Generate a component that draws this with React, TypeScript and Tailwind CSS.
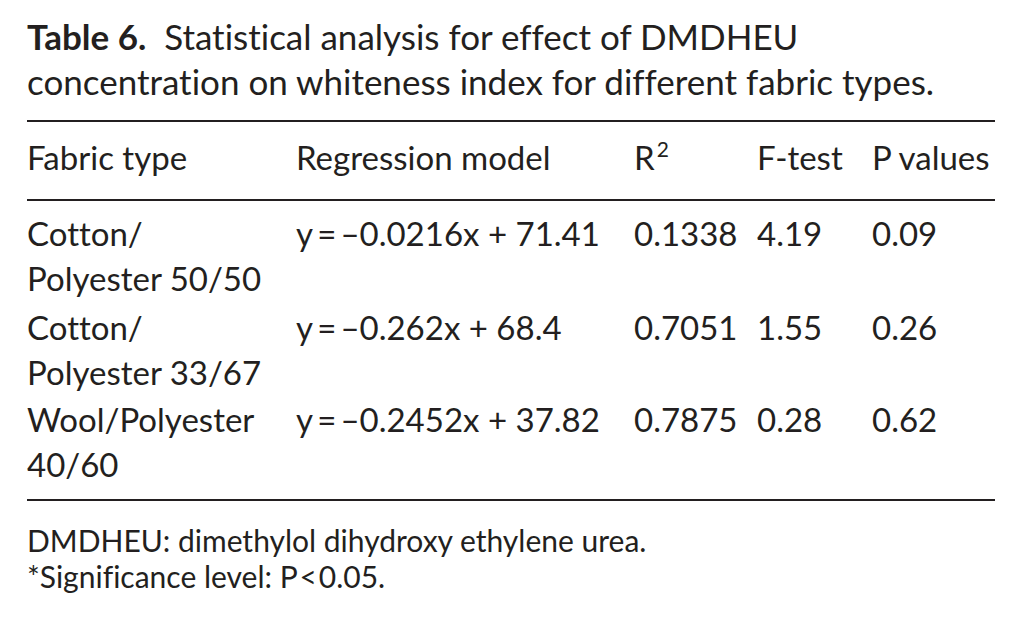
import React from "react";

const rows = [
  {
    fabric: ["Cotton/", "Polyester 50/50"],
    model: "y\u2009=\u2009\u20130.0216x + 71.41",
    r2: "0.1338",
    f: "4.19",
    p: "0.09",
    gap: "pt-[10px]",
  },
  {
    fabric: ["Cotton/", "Polyester 33/67"],
    model: "y\u2009=\u2009\u20130.262x + 68.4",
    r2: "0.7051",
    f: "1.55",
    p: "0.26",
    gap: "pt-[4px]",
  },
  {
    fabric: ["Wool/Polyester", "40/60"],
    model: "y\u2009=\u2009\u20130.2452x + 37.82",
    r2: "0.7875",
    f: "0.28",
    p: "0.62",
    gap: "pt-[2px]",
  },
];

const cols = "grid grid-cols-[269px_338px_123px_115px_1fr]";

export default function App() {
  return (
    <div className="w-[1021px] h-[624px] bg-white text-[#231f20] font-['Lato',sans-serif] [font-variant-ligatures:none] pl-[27px] pr-[26px] pt-[14px]">
      <h1 className="text-[35px] leading-[45px]">
        <span className="font-bold">Table 6.</span>&nbsp; Statistical analysis for effect of DMDHEU
        <br />
        concentration on whiteness index for different fabric types.
      </h1>

      <div className="mt-[16px] h-[2px] bg-[#231f20]" />

      <div className="text-[33px] leading-[45px]">
        <div className={`${cols} pt-[13px] pb-[15px]`}>
          <div>Fabric type</div>
          <div>Regression model</div>
          <div>
            R<span className="text-[21px] relative top-[-13px] ml-[2px]">2</span>
          </div>
          <div>F-test</div>
          <div>P values</div>
        </div>
        <div className="h-[2px] bg-[#231f20]" />

        <div className="pb-[12px]">
          {rows.map((r) => (
            <div key={r.model} className={`${cols} ${r.gap}`}>
              <div>
                {r.fabric[0]}
                <br />
                {r.fabric[1]}
              </div>
              <div>{r.model}</div>
              <div>{r.r2}</div>
              <div>{r.f}</div>
              <div>{r.p}</div>
            </div>
          ))}
        </div>
        <div className="h-[2px] bg-[#231f20]" />
      </div>

      <div className="mt-[21px] text-[30px] leading-[36px]">
        <p>DMDHEU: dimethylol dihydroxy ethylene urea.</p>
        <p>*Significance level: P&#8202;&lt;&#8202;0.05.</p>
      </div>
    </div>
  );
}
